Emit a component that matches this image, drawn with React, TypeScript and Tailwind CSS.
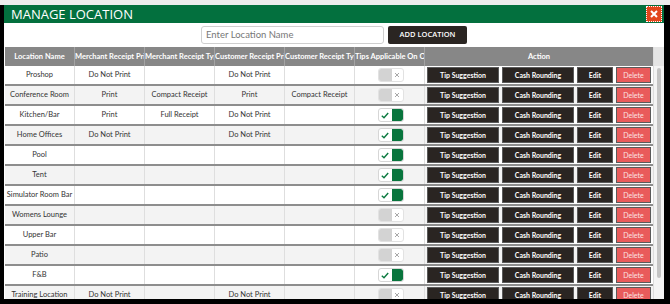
import { Fragment } from 'react';

type Loc = {
  name: string;
  mPrint: string;
  mType: string;
  cPrint: string;
  cType: string;
  tips: boolean;
};

const locations: Loc[] = [
  { name: 'Proshop', mPrint: 'Do Not Print', mType: '', cPrint: 'Do Not Print', cType: '', tips: false },
  { name: 'Conference Room', mPrint: 'Print', mType: 'Compact Receipt', cPrint: 'Print', cType: 'Compact Receipt', tips: false },
  { name: 'Kitchen/Bar', mPrint: 'Print', mType: 'Full Receipt', cPrint: 'Do Not Print', cType: '', tips: true },
  { name: 'Home Offices', mPrint: 'Do Not Print', mType: '', cPrint: 'Do Not Print', cType: '', tips: true },
  { name: 'Pool', mPrint: '', mType: '', cPrint: '', cType: '', tips: true },
  { name: 'Tent', mPrint: '', mType: '', cPrint: '', cType: '', tips: true },
  { name: 'Simulator Room Bar', mPrint: '', mType: '', cPrint: '', cType: '', tips: true },
  { name: 'Womens Lounge', mPrint: '', mType: '', cPrint: '', cType: '', tips: false },
  { name: 'Upper Bar', mPrint: '', mType: '', cPrint: '', cType: '', tips: false },
  { name: 'Patio', mPrint: '', mType: '', cPrint: '', cType: '', tips: false },
  { name: 'F&B', mPrint: '', mType: '', cPrint: '', cType: '', tips: true },
  { name: 'Training Location', mPrint: 'Do Not Print', mType: '', cPrint: 'Do Not Print', cType: '', tips: false },
];

const headers = [
  'Location Name',
  'Merchant Receipt Print',
  'Merchant Receipt Type',
  'Customer Receipt Print',
  'Customer Receipt Type',
  'Tips Applicable On Order',
];

function Toggle({ on }: { on: boolean }) {
  if (on) {
    return (
      <div className="flex h-[14px] w-[26px] overflow-hidden rounded-[3px] border border-[#d6d6d6] bg-white">
        <div className="flex w-[13px] items-center justify-center">
          <svg width="8" height="7" viewBox="0 0 8 7">
            <path d="M0.8 3.8 L3 5.8 L7.2 1" fill="none" stroke="#0b7a40" strokeWidth="1.4" />
          </svg>
        </div>
        <div className="flex-1 rounded-r-[2px] bg-[#08753d]" />
      </div>
    );
  }
  return (
    <div className="flex h-[14px] w-[26px] overflow-hidden rounded-[3px] border border-[#e2e2e2] bg-white">
      <div className="w-[13px] bg-[#d3d3d3]" />
      <div className="flex flex-1 items-center justify-center">
        <svg width="6" height="6" viewBox="0 0 6 6">
          <path d="M1 1 L5 5 M5 1 L1 5" stroke="#a8a8a8" strokeWidth="1" />
        </svg>
      </div>
    </div>
  );
}

export default function App() {
  return (
    <div
      className="h-[304px] w-[670px] overflow-hidden bg-[#ededed] pt-[5px]"
      style={{ fontFamily: '"Open Sans", "Noto Sans", sans-serif' }}
    >
      <div className="flex h-[299px] flex-col bg-black pb-[5px] pl-[4px] pr-[6px]">
        <div className="flex min-h-0 flex-1 flex-col bg-white">
          {/* title bar */}
          <div className="flex h-[18px] items-center justify-between bg-[#03703e] pl-[7px] pr-[2px]">
            <span className="text-[13px] leading-none text-white">MANAGE LOCATION</span>
            <button className="flex h-[16px] w-[16px] items-center justify-center border border-dotted border-white bg-[#e2461c]">
              <svg width="8" height="8" viewBox="0 0 8 8">
                <path d="M1 1 L7 7 M7 1 L1 7" stroke="white" strokeWidth="2" />
              </svg>
            </button>
          </div>

          {/* search row */}
          <div className="flex h-[24px] items-center justify-center gap-[4px]">
            <div className="flex h-[18px] w-[183px] items-center rounded-[3px] border border-[#cfcfcf] pl-[4px] font-['Lato'] text-[9.5px] text-[#777]">
              Enter Location Name
            </div>
            <button className="flex h-[18px] w-[79px] items-center justify-center rounded-[2px] bg-[#2a2522] text-[7.5px] font-semibold text-white">
              ADD LOCATION
            </button>
          </div>

          {/* table */}
          <div className="flex min-h-0 flex-1 pl-px font-['Lato']">
            <div className="min-h-0 w-[648px] overflow-hidden">
              <div className="grid h-[19px] grid-cols-[70px_70px_70px_70px_70px_70px_1fr] bg-[#878787] text-[7.5px] font-bold leading-[19px] text-white">
                {headers.map((h) => (
                  <div
                    key={h}
                    className="overflow-hidden whitespace-nowrap border-r border-[#a3a3a3] text-center"
                  >
                    {h}
                  </div>
                ))}
                <div className="text-center">Action</div>
              </div>
              {locations.map((l, i) => (
                <div
                  key={l.name}
                  className={
                    'grid h-[20px] grid-cols-[70px_70px_70px_70px_70px_70px_1fr] border-b-2 border-[#8d8d8d] text-[7.5px] leading-[18px] text-[#333] ' +
                    (i % 2 === 1 ? 'bg-[#f3f3f3]' : 'bg-white')
                  }
                >
                  {[l.name, l.mPrint, l.mType, l.cPrint, l.cType].map((v, j) => (
                    <div
                      key={j}
                      className="overflow-hidden whitespace-nowrap border-r border-[#dedede] text-center"
                    >
                      {v}
                    </div>
                  ))}
                  <div className="flex items-center justify-center border-r border-[#dedede] pl-[2px]">
                    <Toggle on={l.tips} />
                  </div>
                  <div className="flex items-center gap-[3px] pl-[2px] text-[7px] font-bold text-white">
                    {[
                      ['Tip Suggestion', 'w-[72px] bg-[#2a2522]'],
                      ['Cash Rounding', 'w-[72px] bg-[#2a2522]'],
                      ['Edit', 'w-[36px] bg-[#2a2522]'],
                      ['Delete', 'w-[35px] bg-[#e95b5b] font-normal text-[#fbe3e3]'],
                    ].map(([t, c]) => (
                      <Fragment key={t}>
                        <button
                          className={
                            'flex h-[16px] items-center justify-center border border-[#5a5a5a] ' + c
                          }
                        >
                          {t}
                        </button>
                      </Fragment>
                    ))}
                  </div>
                </div>
              ))}
            </div>
            {/* scrollbar */}
            <div className="flex w-[11px] flex-col border-l border-[#dcdcdc] bg-[#f4f4f4]">
              <div className="h-[19px] bg-[#e4e4e4]" />
              <div className="ml-[3px] mt-[2px] h-[210px] w-[4px] rounded-full bg-[#c4c4c4]" />
            </div>
          </div>
        </div>
      </div>
    </div>
  );
}
